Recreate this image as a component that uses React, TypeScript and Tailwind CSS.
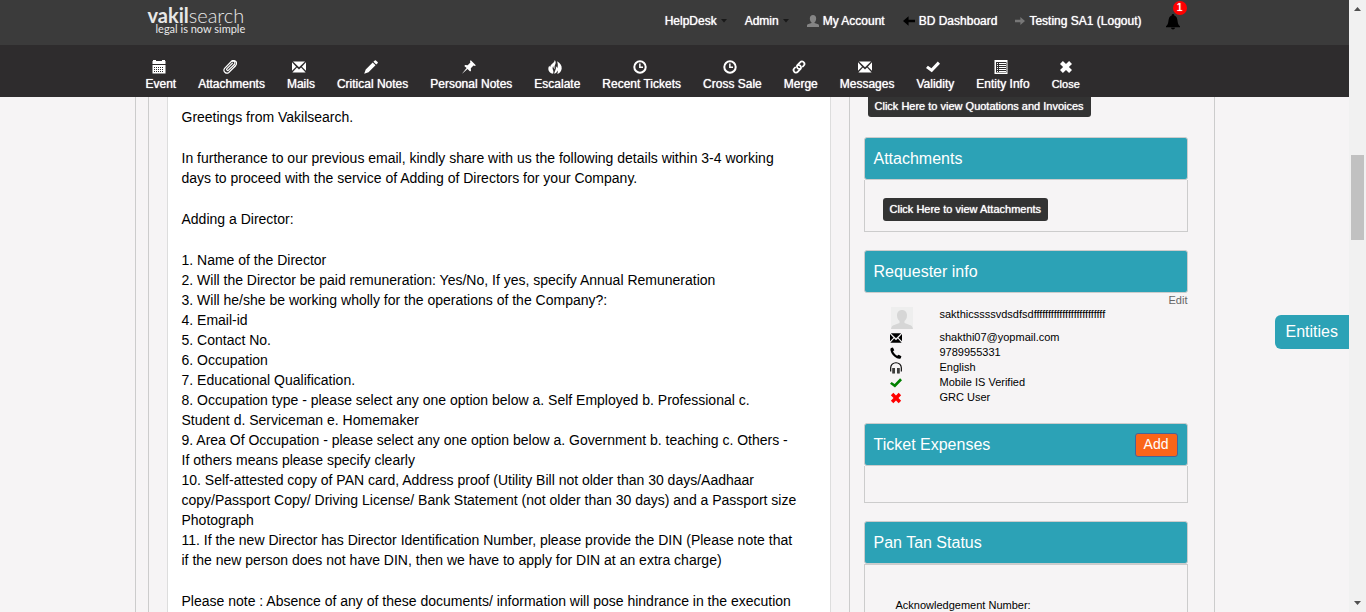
import type { ReactNode } from 'react';

type IconProps = { className?: string };

const Svg = ({ children, className = 'size-3.5', box = '0 0 14 14' }: IconProps & { children: ReactNode; box?: string }) => (
  <svg viewBox={box} className={className} fill="currentColor" aria-hidden="true">
    {children}
  </svg>
);

const CalendarIcon = () => (
  <Svg>
    <path d="M1 0h3v1h6V0h3v1h.5v3H.5V1H1z" />
    <path fillRule="evenodd" d="M.5 5h13v8.500H.5zM2 7v1h1V7zm2 0v1h1V7zm2 0v1h1V7zm2 0v1h1V7zm2 0v1h1V7zM2 9v1h1V9zm2 0v1h1V9zm2 0v1h1V9zm2 0v1h1V9zm2 0v1h1V9zM2 11v1h1v-1zm2 0v1h1v-1zm2 0v1h1v-1zm2 0v1h1v-1zm2 0v1h1v-1z" />
  </Svg>
);

const ClipIcon = () => (
  <Svg>
    <g fill="none" stroke="currentColor" strokeWidth="1.200" strokeLinecap="round">
      <path d="M9.500 3.200 4 8.700a1 1 0 0 0 1.500 1.500l5.800-5.700a2.100 2.100 0 0 0-3-3L1.600 8.300a3 3 0 0 0 4.200 4.200l6-6" />
      <path d="M11.800 6.500c2-2 2.300-3.700 1-5S10.200.5 9 1.200" />
    </g>
  </Svg>
);

const MailIcon = ({ className }: IconProps) => (
  <Svg className={className}>
    <path d="M1 1.500h12L7 7.200zM0 2.300l4.100 4.500L0 10.800zM14 2.300v8.500L9.900 6.800zM4.900 7.600 7 9.500l2.100-1.900 4.500 4.900H.4z" />
  </Svg>
);

const PencilIcon = () => (
  <Svg>
    <path d="M10.800.4a.8.8 0 0 1 1.100 0l1.700 1.700a.8.8 0 0 1 0 1.100l-1.400 1.400-2.800-2.800zM8.700 2.500l2.800 2.800-7 7L.2 13.800l1.500-4.300z" />
  </Svg>
);

const PinIcon = () => (
  <Svg>
    <path d="M8.800.2 13.800 5.200l-.8.800-1.500-.4-2.700 2.700.2 2.400-.9.900-2.600-2.600L.4 13.600l-.2-.2 4.400-5.300L2.300 5.900l.9-.9 2.500.2 2.700-2.700L8 1z" />
  </Svg>
);

const FireIcon = () => (
  <Svg>
    <path d="M6.800 0c1.200 1.600 1.100 3 .4 4.500-.6 1.300-1 2.700-.3 4.700-1.100-.7-1.700-1.800-1.700-3.200-.7 1.300-.8 2.300-.3 3.700.6 1.500.7 2.600.2 4C2 13.200.3 11 .3 8.900c0-1.300.3-2.300.9-3.200.3.700.6 1.100 1 1.400C2.500 3.900 6.600 3.300 6.800 0z" />
    <path d="M9 1.200c3.300 1.800 4.900 4.200 4.700 7.300-.2 2.600-1.900 4.700-4.500 5.400.8-1.400.7-2.400 0-3.500-.3 1.700-1.100 2.900-3 3.300.3-1.800.9-2.700 1.400-4.100.5-1.300.4-2.100.2-3.300.8.400 1.200 1 1.400 1.900.9-2.100.9-4.200-.2-7z" />
  </Svg>
);

const ClockIcon = () => (
  <Svg>
    <circle cx="7" cy="7" r="5.700" fill="none" stroke="currentColor" strokeWidth="2" />
    <path d="M6.100 3.400h1.500v3.200H10v1.500H6.100z" />
  </Svg>
);

const LinkIcon = () => (
  <Svg>
    <g fill="none" stroke="currentColor" strokeWidth="1.800" strokeLinecap="round">
      <path d="M8 8.800a2.400 2.400 0 0 1-2.700-3.500l3-3.200a2.200 2.200 0 0 1 3.500.2c.9 1 .9 2.200 0 3.200l-.9 1" />
      <path d="M6 5.200a2.400 2.400 0 0 1 2.700 3.500l-3 3.200a2.200 2.200 0 0 1-3.500-.2c-.9-1-.9-2.200 0-3.200l.9-1" />
    </g>
  </Svg>
);

const CheckIcon = ({ className }: IconProps) => (
  <Svg className={className}>
    <path d="M11.800 1.500 14 3.700 5.800 12.300 0 8l1.900-2.300 3.500 2.500z" />
  </Svg>
);

const CrossIcon = ({ className }: IconProps) => (
  <Svg className={className}>
    <path d="m3.900 1 3.100 3 3.100-3L13 3.900 9.900 7l3.100 3.100-2.900 2.900L7 10l-3.100 3L1 10.100 4.100 7 1 3.900z" />
  </Svg>
);

const ListIcon = () => (
  <Svg>
    <path fillRule="evenodd" d="M.5 0h13v14H.5zM2 2v10.500h10.500V2z" />
    <path d="M3 3h1v1H3zm2 0h7v1H5zM3 5h1v1H3zm2 0h7v1H5zM3 7h1v1H3zm2 0h7v1H5zM3 9h1v1H3zm2 0h7v1H5zM3 11h1v1H3zm2 0h7v1H5z" />
  </Svg>
);

const PhoneIcon = ({ className }: IconProps) => (
  <Svg className={className}>
    <path d="M1.200 1.200 3.400.6l1.600 3.100-1.500 1.400c.8 2.100 2.800 4.200 4.900 5.200l1.700-1.300 3.200 1.800-.7 2.200c-1.100.9-2.900.8-4.500.1C4.300 11 1.500 8 .7 4.400c-.3-1.400-.3-2.600.5-3.200z" />
  </Svg>
);

const HeadphonesIcon = ({ className }: IconProps) => (
  <Svg className={className}>
    <g fill="none" stroke="currentColor" strokeWidth="1.300">
      <path d="M.8 11V6.800a6.200 6 0 0 1 12.400 0V11" />
      <path d="M4.900 7v6.300M9.100 7v6.300" />
    </g>
    <path d="M2.800 7h1.400v6.300H2.800zM9.800 7h1.400v6.300H9.800z" />
  </Svg>
);

const UserIcon = () => (
  <Svg className="size-3 text-[#858585]">
    <path d="M7 0c2.300 0 3.700 1.500 3.700 4 0 2-.7 3.600-1.900 4.500v.9l4.300 1.500c.6.300.9.700.9 1.400V14H0v-1.700c0-.7.3-1.100.9-1.400l4.300-1.500v-.9C4 7.600 3.300 6 3.300 4 3.300 1.500 4.700 0 7 0z" />
  </Svg>
);

const ArrowIcon = ({ className }: IconProps) => (
  <Svg className={className}>
    <path d="m7.500 1.500 6.500 5.500-6.500 5.500V8.600H0V5.400h7.500z" />
  </Svg>
);

const BellIcon = () => (
  <Svg className="size-4 text-black" box="0 0 16 16">
    <path d="M8 0c.9 0 1.300.6 1.300 1.400C11.400 2 12.300 4 12.500 6.600c.2 2.700.9 4.400 2.500 5.700v.9H1v-.9c1.600-1.300 2.300-3 2.500-5.700C3.700 4 4.600 2 6.700 1.400 6.700.6 7.100 0 8 0zM6 13.800h4c-.2 1.100-1 1.700-2 1.700s-1.800-.6-2-1.700z" />
  </Svg>
);

const Caret = () => (
  <Svg className="h-1 w-1.5 text-[#191919]" box="0 0 6 4">
    <path d="M0 0h6L3 3.500z" />
  </Svg>
);

const tools: { label: string; icon: ReactNode; small?: boolean }[] = [
  { label: 'Event', icon: <CalendarIcon /> },
  { label: 'Attachments', icon: <ClipIcon /> },
  { label: 'Mails', icon: <MailIcon /> },
  { label: 'Critical Notes', icon: <PencilIcon /> },
  { label: 'Personal Notes', icon: <PinIcon /> },
  { label: 'Escalate', icon: <FireIcon /> },
  { label: 'Recent Tickets', icon: <ClockIcon /> },
  { label: 'Cross Sale', icon: <ClockIcon /> },
  { label: 'Merge', icon: <LinkIcon /> },
  { label: 'Messages', icon: <MailIcon /> },
  { label: 'Validity', icon: <CheckIcon /> },
  { label: 'Entity Info', icon: <ListIcon /> },
  { label: 'Close', icon: <CrossIcon />, small: true },
];

const details = [
  '1. Name of the Director',
  '2. Will the Director be paid remuneration: Yes/No, If yes, specify Annual Remuneration',
  '3. Will he/she be working wholly for the operations of the Company?:',
  '4. Email-id',
  '5. Contact No.',
  '6. Occupation',
  '7. Educational Qualification.',
  '8. Occupation type - please select any one option below a. Self Employed b. Professional c. Student d. Serviceman e. Homemaker',
  '9. Area Of Occupation - please select any one option below a. Government b. teaching c. Others - If others means please specify clearly',
  '10. Self-attested copy of PAN card, Address proof (Utility Bill not older than 30 days/Aadhaar copy/Passport Copy/ Driving License/ Bank Statement (not older than 30 days) and a Passport size Photograph',
  '11. If the new Director has Director Identification Number, please provide the DIN (Please note that if the new person does not have DIN, then we have to apply for DIN at an extra charge)',
];

const contact: { icon: ReactNode; text: string }[] = [
  { icon: <MailIcon className="size-3" />, text: 'shakthi07@yopmail.com' },
  { icon: <PhoneIcon className="size-3" />, text: '9789955331' },
  { icon: <HeadphonesIcon className="size-3" />, text: 'English' },
  { icon: <CheckIcon className="size-3 text-[#008000]" />, text: 'Mobile IS Verified' },
  { icon: <CrossIcon className="size-3 text-[#ff0000]" />, text: 'GRC User' },
];

const PanelTitle = ({ children, action }: { children: ReactNode; action?: ReactNode }) => (
  <div className="flex h-[43px] items-center justify-between rounded-[3px] border border-[#cccccc] bg-[#2ca2b6] px-[9px] text-white">
    <h2 className="text-base">{children}</h2>
    {action}
  </div>
);

const darkButton = 'bg-[#333333] px-[7px] text-[11px] text-white [text-shadow:0_0_1px_#fff]';

export default function App() {
  return (
    <div className="flex h-screen overflow-hidden bg-[#f6f4f5] font-['Liberation_Sans',Arial,sans-serif] text-black">
      <div className="relative flex min-w-0 flex-1 flex-col">
        <header className="shrink-0 text-xs text-white [text-shadow:0_0_1px_#fff]">
          <div className="h-[45px] bg-[#3b3b3b]">
            <div className="mx-auto flex w-full max-w-[1080px] justify-between pl-[13px] pr-[34px]">
              <a href="#home" className="flex flex-col pt-[5px] font-['Lato',sans-serif] text-[#e8e8e8] [text-shadow:none]">
                <span className="text-xl leading-5">
                  <b>vakil</b>
                  <span className="font-light">search</span>
                </span>
                <span className="pl-2 text-[11px] leading-2">legal is now simple</span>
              </a>
              <nav className="flex h-[41px] items-center">
                <a href="#helpdesk" className="mr-[18px] flex items-center gap-1">HelpDesk <Caret /></a>
                <a href="#admin" className="mr-[18px] flex items-center gap-1">Admin <Caret /></a>
                <a href="#account" className="mr-[18px] flex items-center gap-1"><UserIcon /> My Account</a>
                <a href="#dashboard" className="mr-[18px] flex items-center gap-1">
                  <ArrowIcon className="size-3 rotate-180 text-black" /> BD Dashboard
                </a>
                <a href="#logout" className="mr-[23px] flex items-center gap-1">
                  <ArrowIcon className="size-2.5 text-[#777777]" /> Testing SA1 (Logout)
                </a>
                <button type="button" aria-label="Notifications" className="relative pt-0.5">
                  <BellIcon />
                  <span className="absolute -top-[11px] left-2 flex size-3.5 items-center justify-center rounded-full bg-[#ff0000] text-[11px] [text-shadow:0_0_1px_#fff]">1</span>
                </button>
              </nav>
            </div>
          </div>
          <div className="h-[52px] bg-[#2e2c2d]">
            <nav className="mx-auto flex w-full max-w-[1080px] gap-[22px] pl-[11px] pt-[15px]">
              {tools.map((tool) => (
                <button key={tool.label} type="button" className="flex flex-col items-center whitespace-nowrap [text-shadow:0_0_1px_#fff]">
                  <span className={tool.small ? '' : 'pr-1'}>{tool.icon}</span>
                  <span className={tool.small ? 'pt-0.5 text-[11px] leading-4' : 'pt-0.5 leading-4'}>{tool.label}</span>
                </button>
              ))}
            </nav>
          </div>
        </header>

        <main className="mx-auto flex min-h-0 w-full max-w-[1080px] flex-1 overflow-hidden border-x border-[#cccccc] pl-3">
          <section className="min-w-0 flex-1 border-x border-[#cccccc] px-[18px]">
            <article className="flex flex-col gap-[21px] border-x border-[#dddddd] bg-white pb-6 pl-3.5 pr-[31px] pt-2.5 text-sm leading-5">
              <p>Greetings from Vakilsearch.</p>
              <p>
                In furtherance to our previous email, kindly share with us the following details within 3-4 working days to
                proceed with the service of Adding of Directors for your Company.
              </p>
              <p>Adding a Director:</p>
              <div>
                {details.map((line) => (
                  <p key={line}>{line}</p>
                ))}
              </div>
              <p>
                Please note : Absence of any of these documents/ information will pose hindrance in the execution
              </p>
            </article>
          </section>

          <aside className="w-[364px] shrink-0 pl-3.5 pr-[26px]">
            <button type="button" className={`${darkButton} ml-1 block h-5 rounded-b-[3px] pb-0.5`}>
              Click Here to view Quotations and Invoices
            </button>

            <div className="flex flex-col gap-[18px] pt-5">
              <section>
                <PanelTitle>Attachments</PanelTitle>
                <div className="h-[52px] border border-t-0 border-[#cccccc] pl-[18px] pt-[18px]">
                  <button type="button" className={`${darkButton} block h-[23px] rounded-[3px]`}>
                    Click Here to view Attachments
                  </button>
                </div>
              </section>

              <section className="text-[11px] leading-[15px]">
                <PanelTitle>Requester info</PanelTitle>
                <a href="#edit" className="block text-right leading-[14px] text-[#666666]">Edit</a>
                <div className="flex h-[23px] pl-[27px]">
                  <svg viewBox="0 0 22 22" className="mr-[27px] size-[22px]" aria-hidden="true">
                    <path d="M0 0h22v22H0z" fill="#eeeeee" />
                    <path d="M11 3c3 0 5 2.200 5 5.500 0 2.500-1 4.500-2.500 5.500v2l6 2.300c1.300.6 2 1.700 2.500 3.700H0c.5-2 1.200-3.100 2.500-3.700L8.500 16v-2C7 13 6 11 6 8.500 6 5.200 8 3 11 3z" fill="#d6d6d6" />
                  </svg>
                  <span>sakthicssssvdsdfsdfffffffffffffffffffffffff</span>
                </div>
                <ul>
                  {contact.map((row) => (
                    <li key={row.text} className="flex h-[15px] items-center gap-[38px] pl-[26px]">
                      {row.icon}
                      <span>{row.text}</span>
                    </li>
                  ))}
                </ul>
              </section>

              <section>
                <PanelTitle
                  action={
                    <button type="button" className="h-6 rounded-[3px] border border-[#44659a] bg-[#fa6519] px-2 pb-0.5 text-sm leading-5">
                      Add
                    </button>
                  }
                >
                  Ticket Expenses
                </PanelTitle>
                <div className="h-[37px] border border-t-0 border-[#cccccc]" />
              </section>

              <section>
                <PanelTitle>Pan Tan Status</PanelTitle>
                <div className="h-24 border border-[#cccccc] pl-[31px] pt-8 text-[11px] leading-4">Acknowledgement Number:</div>
              </section>
            </div>
          </aside>
        </main>

        <button type="button" className="absolute right-0 top-[315px] h-[34px] rounded-l-md bg-[#2ca2b6] px-[11px] text-base text-white">
          Entities
        </button>
      </div>

      <div className="flex w-[17px] shrink-0 flex-col items-center justify-between bg-[#f1f1f1] py-[7px]" aria-hidden="true">
        <svg viewBox="0 0 7 4" className="h-1 w-[7px]"><path d="M0 4h7L3.500 0z" fill="#505050" /></svg>
        <div className="mt-36 h-[85px] w-[13px] bg-[#c1c1c1]" />
        <div className="flex-1" />
        <svg viewBox="0 0 7 4" className="h-1 w-[7px]"><path d="M0 0h7L3.500 4z" fill="#505050" /></svg>
      </div>
    </div>
  );
}
